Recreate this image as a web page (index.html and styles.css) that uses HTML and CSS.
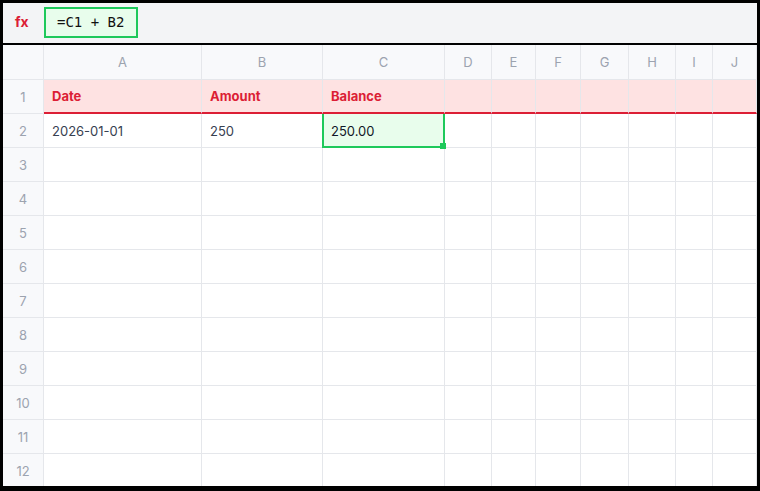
FILE: index.html
```html
<!DOCTYPE html>
<html>
<head>
<meta charset="utf-8">
<link rel="stylesheet" href="styles.css">
</head>
<body>
<div class="frame">
  <div class="toolbar">
    <span class="fx">fx</span>
    <div class="formula">=C1 + B2</div>
  </div>
  <div class="grid">
    <div class="corner"></div>
    <div class="colh">A</div><div class="colh">B</div><div class="colh">C</div><div class="colh">D</div><div class="colh">E</div><div class="colh">F</div><div class="colh">G</div><div class="colh">H</div><div class="colh">I</div><div class="colh">J</div>

    <div class="rowh">1</div>
    <div class="cell hdr">Date</div><div class="cell hdr">Amount</div><div class="cell hdr">Balance</div><div class="cell hdr"></div><div class="cell hdr"></div><div class="cell hdr"></div><div class="cell hdr"></div><div class="cell hdr"></div><div class="cell hdr"></div><div class="cell hdr"></div>

    <div class="rowh">2</div>
    <div class="cell">2026-01-01</div><div class="cell">250</div><div class="cell sel">250.00<span class="handle"></span></div><div class="cell"></div><div class="cell"></div><div class="cell"></div><div class="cell"></div><div class="cell"></div><div class="cell"></div><div class="cell"></div>

    <div class="rowh">3</div><div class="cell"></div><div class="cell"></div><div class="cell"></div><div class="cell"></div><div class="cell"></div><div class="cell"></div><div class="cell"></div><div class="cell"></div><div class="cell"></div><div class="cell"></div>
    <div class="rowh">4</div><div class="cell"></div><div class="cell"></div><div class="cell"></div><div class="cell"></div><div class="cell"></div><div class="cell"></div><div class="cell"></div><div class="cell"></div><div class="cell"></div><div class="cell"></div>
    <div class="rowh">5</div><div class="cell"></div><div class="cell"></div><div class="cell"></div><div class="cell"></div><div class="cell"></div><div class="cell"></div><div class="cell"></div><div class="cell"></div><div class="cell"></div><div class="cell"></div>
    <div class="rowh">6</div><div class="cell"></div><div class="cell"></div><div class="cell"></div><div class="cell"></div><div class="cell"></div><div class="cell"></div><div class="cell"></div><div class="cell"></div><div class="cell"></div><div class="cell"></div>
    <div class="rowh">7</div><div class="cell"></div><div class="cell"></div><div class="cell"></div><div class="cell"></div><div class="cell"></div><div class="cell"></div><div class="cell"></div><div class="cell"></div><div class="cell"></div><div class="cell"></div>
    <div class="rowh">8</div><div class="cell"></div><div class="cell"></div><div class="cell"></div><div class="cell"></div><div class="cell"></div><div class="cell"></div><div class="cell"></div><div class="cell"></div><div class="cell"></div><div class="cell"></div>
    <div class="rowh">9</div><div class="cell"></div><div class="cell"></div><div class="cell"></div><div class="cell"></div><div class="cell"></div><div class="cell"></div><div class="cell"></div><div class="cell"></div><div class="cell"></div><div class="cell"></div>
    <div class="rowh">10</div><div class="cell"></div><div class="cell"></div><div class="cell"></div><div class="cell"></div><div class="cell"></div><div class="cell"></div><div class="cell"></div><div class="cell"></div><div class="cell"></div><div class="cell"></div>
    <div class="rowh">11</div><div class="cell"></div><div class="cell"></div><div class="cell"></div><div class="cell"></div><div class="cell"></div><div class="cell"></div><div class="cell"></div><div class="cell"></div><div class="cell"></div><div class="cell"></div>
    <div class="rowh">12</div><div class="cell"></div><div class="cell"></div><div class="cell"></div><div class="cell"></div><div class="cell"></div><div class="cell"></div><div class="cell"></div><div class="cell"></div><div class="cell"></div><div class="cell"></div>
  </div>
</div>
</body>
</html>
```

FILE: styles.css
```css
html, body {
  margin: 0;
  padding: 0;
  background: #000;
}
.frame {
  box-sizing: border-box;
  width: 760px;
  height: 491px;
  border: 3px solid #000;
  border-bottom-width: 5px;
  background: #fff;
  overflow: hidden;
  font-family: Inter, "Liberation Sans", sans-serif;
  font-size: 13px;
  display: flex;
  flex-direction: column;
}
.toolbar {
  box-sizing: border-box;
  height: 42px;
  flex: none;
  background: #f3f4f6;
  border-bottom: 2px solid #000;
  display: flex;
  align-items: center;
  padding-left: 12px;
  padding-bottom: 2px;
}
.fx {
  color: #dc1e35;
  font-weight: 700;
  font-size: 14px;
  width: 29px;
  line-height: 1;
}
.formula {
  box-sizing: border-box;
  height: 31px;
  width: 94px;
  border: 2px solid #1ec95b;
  background: #e8fdec;
  font-family: "DejaVu Sans Mono", "Liberation Mono", monospace;
  font-size: 14px;
  color: #111;
  display: flex;
  align-items: center;
  padding-left: 11px;
  white-space: pre;
}
.grid {
  display: grid;
  grid-template-columns: 41px 158px 121px 122px 47px 44px 45px 48px 47px 37px 44px;
  grid-template-rows: 35px repeat(12, 34px);
  flex: none;
}
.grid > div {
  box-sizing: border-box;
  border-right: 1px solid #e5e7eb;
  border-bottom: 1px solid #e5e7eb;
}
.corner, .colh, .rowh {
  background: #f8f9fb;
  color: #9ca3af;
  display: flex;
  align-items: center;
  justify-content: center;
}
.cell {
  display: flex;
  align-items: center;
  padding-left: 8px;
  color: #374151;
  white-space: nowrap;
}
.grid > .hdr {
  background: #fee2e2;
  color: #dc1e35;
  font-weight: 700;
  border-bottom: 2px solid #dc1e35;
}
.sel {
  position: relative;
  background: #e8fdec;
  color: #111827;
}
.sel::before {
  content: "";
  position: absolute;
  left: -1px;
  right: -1px;
  top: 0;
  bottom: -1px;
  border: 2px solid #1ec95b;
  border-top-width: 0;
  z-index: 2;
}
.handle {
  position: absolute;
  right: -2px;
  bottom: -2px;
  width: 6px;
  height: 6px;
  background: #1ec95b;
  z-index: 3;
}
```
